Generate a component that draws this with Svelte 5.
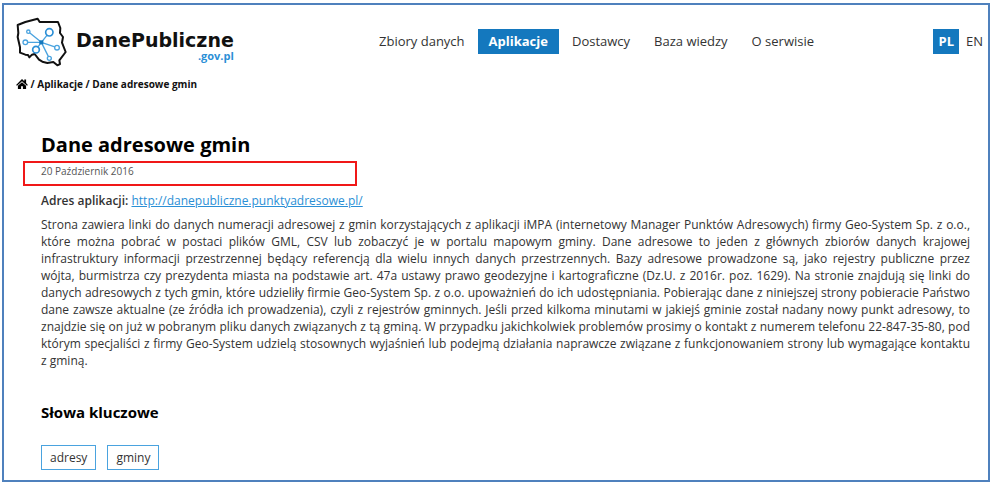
<script lang="ts">
    const menu = [
        { label: 'Zbiory danych', href: '#dataset', active: false },
        { label: 'Aplikacje', href: '#application', active: true },
        { label: 'Dostawcy', href: '#organization', active: false },
        { label: 'Baza wiedzy', href: '#knowledge-base', active: false },
        { label: 'O serwisie', href: '#about', active: false },
    ];

    const languages = [
        { label: 'PL', href: '#pl', active: true },
        { label: 'EN', href: '#en', active: false },
    ];

    const tags = ['adresy', 'gminy'];
    const appUrl = 'http://danepubliczne.punktyadresowe.pl/';
</script>

<div class="page">
    <header>
        <a class="logo" href="#home">
            <svg viewBox="0 0 156 150" aria-hidden="true">
                <path
                    class="outline"
                    d="M5 24 L28 15 L65 5 L71 15 L126 15 L133 33 L132 48 L141 60 L138 77 L149 105 L130 130 L132 141 L124 145 L112 135 L94 138 L79 134 L69 128 L56 111 L48 113 L40 121 L36 114 L28 113 L12 107 L12 91 L5 60 L7 48 Z"
                />
                <g class="links">
                    <path d="M76 76 L37 44 M76 76 L100 46 M76 76 L28 76 M76 76 L60 98 M76 76 L123 92 M76 76 L100 124" />
                    <circle cx="37" cy="44" r="5" />
                    <circle class="big" cx="100" cy="46" r="11" />
                    <circle cx="28" cy="76" r="7" />
                    <circle class="big" cx="60" cy="98" r="10" />
                    <circle cx="123" cy="92" r="7" />
                    <circle cx="100" cy="124" r="6" />
                </g>
                <rect x="70" y="70" width="12" height="12" fill="#1478be" />
            </svg>
            <span class="wordmark">
                <span class="name">DanePubliczne</span>
                <span class="domain">.gov.pl</span>
            </span>
        </a>
        <nav class="menu">
            {#each menu as item}
                <a href={item.href} class:active={item.active}>{item.label}</a>
            {/each}
        </nav>
        <nav class="languages">
            {#each languages as lang}
                <a href={lang.href} class:active={lang.active}>{lang.label}</a>
            {/each}
        </nav>
    </header>

    <nav class="breadcrumb">
        <a href="#home" aria-label="Strona główna">
            <svg viewBox="0 0 26 22" aria-hidden="true">
                <path d="M13 0 L18 5 V1 H22 V9 L26 13 L24 15 L13 5 L2 15 L0 13 Z" />
                <path d="M13 7 L22 15 V22 H15 V16 H11 V22 H4 V15 Z" />
            </svg>
        </a>
        / <a href="#application">Aplikacje</a> / <a href="#gminy">Dane adresowe gmin</a>
    </nav>

    <main>
        <h1>Dane adresowe gmin</h1>
        <p class="date">20 Październik 2016</p>
        <p class="address"><strong>Adres aplikacji:</strong> <a href={appUrl}>{appUrl}</a></p>
        <p class="description">
            Strona zawiera linki do danych numeracji adresowej z gmin korzystających z aplikacji iMPA
            (internetowy Manager Punktów Adresowych) firmy Geo-System Sp. z o.o., które można pobrać w
            postaci plików GML, CSV lub zobaczyć je w portalu mapowym gminy. Dane adresowe to jeden z
            głównych zbiorów danych krajowej infrastruktury informacji przestrzennej będący referencją
            dla wielu innych danych przestrzennych. Bazy adresowe prowadzone są, jako rejestry publiczne
            przez wójta,&nbsp;burmistrza czy prezydenta miasta na podstawie art. 47a ustawy prawo geodezyjne
            i kartograficzne (Dz.U. z 2016r. poz. 1629). Na stronie znajdują się linki do danych
            adresowych z tych gmin, które udzieliły firmie Geo-System Sp. z o.o. upoważnień do ich
            udostępniania. Pobierając dane z niniejszej strony pobieracie Państwo dane zawsze aktualne
            (ze źródła ich prowadzenia), czyli z rejestrów gminnych. Jeśli przed kilkoma minutami w
            jakiejś gminie został nadany nowy punkt adresowy, to znajdzie się on już w pobranym pliku
            danych związanych z tą gminą. W przypadku jakichkolwiek problemów prosimy o kontakt z
            numerem telefonu 22-847-35-80, pod którym specjaliści z firmy Geo-System udzielą stosownych
            wyjaśnień lub podejmą działania naprawcze związane z funkcjonowaniem strony lub wymagające
            kontaktu z&nbsp;gminą.
        </p>

        <h2>Słowa kluczowe</h2>
        <ul class="tags">
            {#each tags as tag}
                <li><a href="#{tag}">{tag}</a></li>
            {/each}
        </ul>
    </main>
</div>

<style>
    :global(body) {
        background: #fff;
    }

    .page {
        margin: 3px 3px 3px 2px;
        border: 2px solid #4f81bd;
        font-family: 'Open Sans', 'Liberation Sans', sans-serif;
        font-size: 12px;
        line-height: 17px;
        color: #333;
    }

    a {
        color: inherit;
        text-decoration: none;
    }

    header {
        display: flex;
        align-items: flex-start;
        padding-top: 12px;
    }

    .logo {
        display: flex;
        gap: 8px;
        width: 352px;
        padding-left: 12px;
    }

    .logo svg {
        width: 52px;
        height: 50px;
    }

    .outline {
        fill: none;
        stroke: #111;
        stroke-width: 6;
        stroke-linejoin: round;
    }

    .links {
        fill: #fff;
        stroke: #4aa3df;
        stroke-width: 4;
    }

    .links .big {
        stroke: #2b8fd6;
        stroke-width: 5;
    }

    .wordmark {
        display: flex;
        flex-direction: column;
        padding-top: 12px;
        font-weight: 700;
    }

    .name {
        font-family: 'DejaVu Sans', sans-serif;
        font-size: 19px;
        line-height: 22px;
        color: #111;
    }

    .domain {
        align-self: flex-end;
        font-size: 11px;
        line-height: 10px;
        color: #2b8fd6;
    }

    .menu,
    .languages {
        display: flex;
        gap: 2px;
        padding-top: 12px;
        font-size: 13px;
        line-height: 25px;
    }

    .menu a {
        padding: 0 11px;
    }

    .languages {
        margin-left: auto;
    }

    .languages a {
        padding: 0 5px;
    }

    .menu .active,
    .languages .active {
        background: #1478be;
        color: #fff;
        font-weight: 700;
    }

    .breadcrumb {
        padding: 9px 12px 0;
        font-size: 10px;
        font-weight: 700;
        color: #111;
    }

    .breadcrumb svg {
        width: 12px;
        height: 10px;
        vertical-align: -1px;
    }

    main {
        padding: 38px 18px 10px 37px;
    }

    h1,
    h2,
    p {
        margin: 0;
    }

    h1 {
        margin-bottom: 2px;
        font-size: 20px;
        line-height: 28px;
        color: #000;
    }

    .date {
        width: 314px;
        margin-left: -18px;
        padding: 0 0 4px 16px;
        border: 2px solid #f01818;
        font-size: 10px;
        color: #555;
    }

    .address {
        margin-top: 6px;
    }

    .address strong {
        font-weight: 600;
    }

    .address a {
        color: #2b8fd6;
        text-decoration: underline;
    }

    .description {
        margin-top: 7px;
        text-align: justify;
    }

    h2 {
        margin-top: 33px;
        font-size: 15px;
        line-height: 20px;
        color: #000;
    }

    .tags {
        display: flex;
        gap: 11px;
        margin: 23px 0 0;
        padding: 0;
        list-style: none;
    }

    .tags a {
        display: block;
        padding: 3px 8px;
        border: 1px solid #4aa3df;
    }
</style>
